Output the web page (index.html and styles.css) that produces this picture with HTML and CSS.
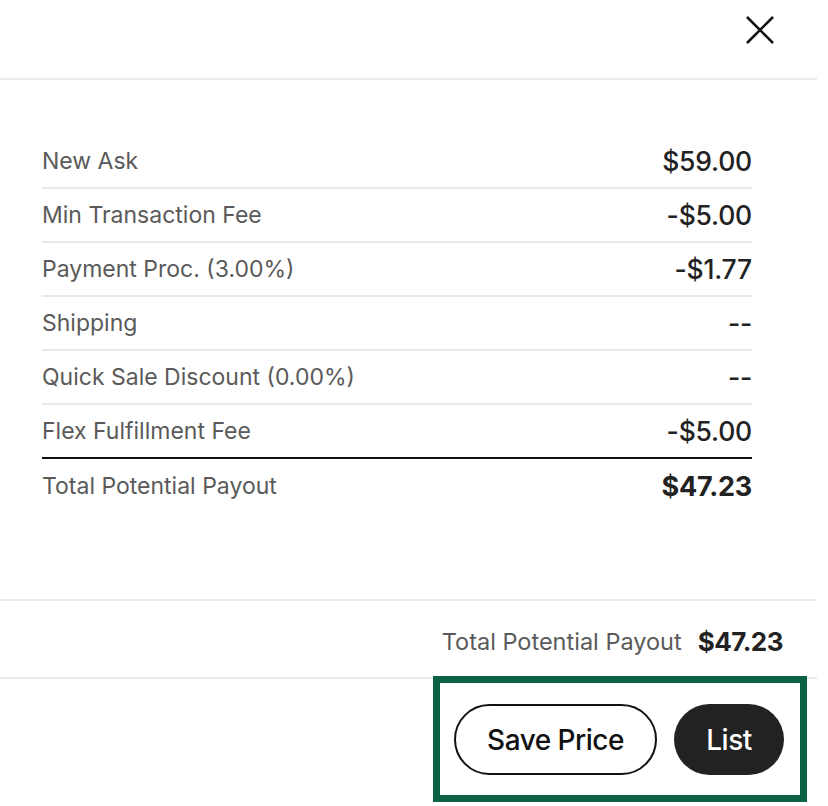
FILE: index.html
```
<!DOCTYPE html>
<html lang="en">
<head>
<meta charset="utf-8">
<title>Payout</title>
<link rel="stylesheet" href="styles.css">
</head>
<body>
<div class="sheet">
  <header class="head">
    <button class="close" aria-label="Close">
      <svg width="30" height="30" viewBox="0 0 30 30"><path d="M2 2 L28 28 M28 2 L2 28" stroke="#111" stroke-width="2.6" fill="none"/></svg>
    </button>
  </header>
  <main class="body">
    <div class="rows">
      <div class="row"><span class="lbl">New Ask</span><span class="val">$59.00</span></div>
      <div class="row"><span class="lbl">Min Transaction Fee</span><span class="val">-$5.00</span></div>
      <div class="row"><span class="lbl">Payment Proc. (3.00%)</span><span class="val">-$1.77</span></div>
      <div class="row"><span class="lbl">Shipping</span><span class="val">--</span></div>
      <div class="row"><span class="lbl">Quick Sale Discount (0.00%)</span><span class="val">--</span></div>
      <div class="row last"><span class="lbl">Flex Fulfillment Fee</span><span class="val">-$5.00</span></div>
      <div class="row total"><span class="lbl">Total Potential Payout</span><span class="val">$47.23</span></div>
    </div>
  </main>
  <section class="summary">
    <span class="sum-lbl">Total Potential Payout</span>
    <span class="sum-val">$47.23</span>
  </section>
  <footer class="actions">
    <div class="btn-group">
      <button class="btn outline">Save Price</button>
      <button class="btn solid">List</button>
    </div>
  </footer>
</div>
</body>
</html>
```
FILE: styles.css
```
* { box-sizing: border-box; }
html, body { margin: 0; padding: 0; background: #fff; }
body { font-family: Inter, "Noto Sans", "Liberation Sans", sans-serif; color: #222; }
.sheet { width: 817px; }
.head {
  height: 80px;
  border-bottom: 2px solid #ebebeb;
  display: flex;
  justify-content: flex-end;
  align-items: flex-start;
  padding: 15px 42px 0 0;
}
.close { background: none; border: 0; padding: 0; width: 30px; height: 30px; cursor: pointer; }
.close svg { display: block; }
.body { padding: 55px 65px 86px 42px; border-bottom: 2px solid #ebebeb; }
.row {
  display: flex;
  justify-content: space-between;
  align-items: center;
  height: 54px;
  border-bottom: 2px solid #e7e7ec;
}
.row.last { border-bottom: 2px solid #111; }
.row.total { border-bottom: 0; }
.lbl { font-size: 23px; color: #5a5a5a; }
.val { font-size: 26.5px; color: #222; font-weight: 500; letter-spacing: -0.2px; }
.total .val { font-weight: 700; font-size: 27px; }
.summary {
  height: 78px;
  display: flex;
  justify-content: flex-end;
  align-items: center;
  gap: 16px;
  padding: 4px 34px 0 0;
  border-bottom: 2px solid #ebebeb;
}
.sum-lbl { font-size: 23.5px; color: #5a5a5a; }
.sum-val { font-size: 26px; font-weight: 700; color: #222; letter-spacing: -0.5px; }
.actions { display: flex; justify-content: flex-end; padding: 0 10px 0 0; }
.btn-group {
  display: flex;
  gap: 17px;
  border: 7px solid #0b6142;
  padding: 21px 15px 20px 14px;
  margin-top: -3px;
  width: 374px;
}
.btn {
  height: 71px;
  border-radius: 36px;
  font-family: Inter, "Noto Sans", "Liberation Sans", sans-serif;
  font-size: 28px;
  font-weight: 500;
  letter-spacing: -0.5px;
  cursor: pointer;
}
.btn.outline { width: 203px; background: #fff; color: #111; border: 2px solid #111; }
.btn.solid { width: 110px; background: #222; color: #fff; border: 0; }
```
